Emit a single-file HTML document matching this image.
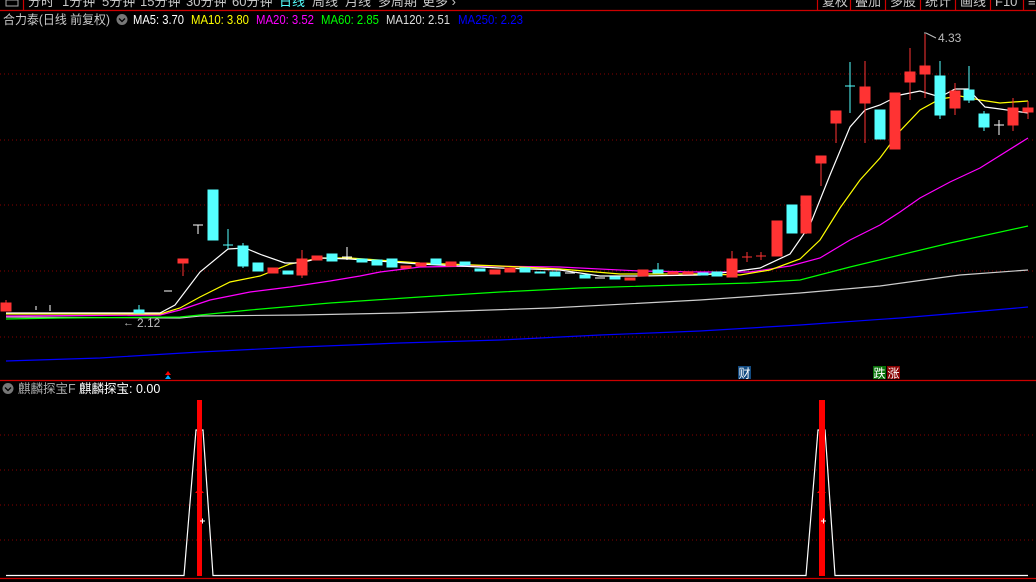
<!DOCTYPE html>
<html><head><meta charset="utf-8"><style>
html,body{margin:0;padding:0;background:#000;width:1036px;height:582px;overflow:hidden}
svg{display:block}
text{font-family:"Liberation Sans","Noto Sans CJK SC",sans-serif}
</style></head><body>
<svg width="1036" height="582" viewBox="0 0 1036 582" xmlns="http://www.w3.org/2000/svg">
<rect width="1036" height="582" fill="#000"/>
<!-- top menu -->
<g font-size="13" fill="#c8c8c8">
<text x="28" y="6">分时</text><text x="62" y="6">1分钟</text><text x="102" y="6">5分钟</text><text x="140" y="6">15分钟</text><text x="186" y="6">30分钟</text><text x="232" y="6">60分钟</text>
<text x="279" y="6" fill="#5ff">日线</text>
<text x="312" y="6">周线</text><text x="345" y="6">月线</text><text x="378" y="6">多周期</text><text x="422" y="6">更多 ›</text>
<text x="822" y="6">复权</text><text x="855" y="6">叠加</text><text x="890" y="6">多股</text><text x="925" y="6">统计</text><text x="960" y="6">画线</text><text x="995" y="6">F10</text><text x="1028" y="6">≡</text>
</g>
<rect x="6" y="0" width="12" height="6" fill="none" stroke="#aaa"/>
<g stroke="#c00" stroke-width="1.2">
<line x1="0" y1="10.5" x2="1036" y2="10.5"/><line x1="23.5" y1="0" x2="23.5" y2="10"/>
<line x1="817.5" y1="0" x2="817.5" y2="10"/><line x1="850.5" y1="0" x2="850.5" y2="10"/><line x1="885.5" y1="0" x2="885.5" y2="10"/><line x1="920.5" y1="0" x2="920.5" y2="10"/><line x1="955.5" y1="0" x2="955.5" y2="10"/><line x1="990.5" y1="0" x2="990.5" y2="10"/><line x1="1023.5" y1="0" x2="1023.5" y2="10"/>
<line x1="0" y1="380.5" x2="1036" y2="380.5"/><line x1="0" y1="578.5" x2="1036" y2="578.5"/>
</g>
<!-- legend -->
<g font-size="12.5">
<text x="3" y="24" fill="#c8c8c8" textLength="107" lengthAdjust="spacingAndGlyphs">合力泰(日线 前复权)</text>
<circle cx="122" cy="19.5" r="5.5" fill="#777"/><path d="M119 18.5l3 3 3-3" stroke="#000" fill="none" stroke-width="1.3"/>
<text x="133" y="24" fill="#fff" textLength="51" lengthAdjust="spacingAndGlyphs">MA5: 3.70</text>
<text x="191" y="24" fill="#ff0" textLength="58" lengthAdjust="spacingAndGlyphs">MA10: 3.80</text>
<text x="256" y="24" fill="#f0f" textLength="58" lengthAdjust="spacingAndGlyphs">MA20: 3.52</text>
<text x="321" y="24" fill="#0f0" textLength="58" lengthAdjust="spacingAndGlyphs">MA60: 2.85</text>
<text x="386" y="24" fill="#ddd" textLength="64" lengthAdjust="spacingAndGlyphs">MA120: 2.51</text>
<text x="458" y="24" fill="#00f" textLength="65" lengthAdjust="spacingAndGlyphs">MA250: 2.23</text>
</g>
<!-- grid -->
<g stroke="#800" stroke-dasharray="1,3">
<line x1="0" y1="74" x2="1036" y2="74"/><line x1="0" y1="140" x2="1036" y2="140"/><line x1="0" y1="205" x2="1036" y2="205"/><line x1="0" y1="271" x2="1036" y2="271"/><line x1="0" y1="337" x2="1036" y2="337"/>
<line x1="0" y1="435" x2="1036" y2="435"/><line x1="0" y1="470" x2="1036" y2="470"/><line x1="0" y1="505" x2="1036" y2="505"/><line x1="0" y1="540" x2="1036" y2="540"/>
</g>
<!-- MA lines -->
<g fill="none" stroke-width="1.2">
<polyline stroke="#00f" points="6,361 100,358 200,352 300,347 400,343 500,340 600,335 700,331 800,325 900,318 960,313 1028,307"/>
<polyline stroke="#ccc" points="6,317 180,318 200,316 300,315 400,313 550,308 700,300 800,293 880,286 960,275 1028,270"/>
<polyline stroke="#0f0" points="6,319 60,318 180,317 250,310 330,303 420,297 500,292 580,288 680,285 750,283 800,280 850,267 900,255 950,243 1028,226"/>
<polyline stroke="#f0f" points="6,316 160,315 180,310 210,300 250,292 290,287 330,281 360,276 380,272 420,267 480,266 560,267 640,271 700,272 750,272 790,266 820,258 850,240 880,225 900,212 920,198 950,182 980,168 1028,138"/>
<polyline stroke="#ff0" points="6,314 160,314 180,308 200,297 230,282 260,276 290,264 320,258 350,258 420,263 500,266 560,269 620,274 700,274 740,275 770,270 800,259 820,240 840,208 860,180 880,158 900,131 920,110 940,99 960,96 980,100 1000,103 1028,101"/>
<polyline stroke="#fff" points="6,313 160,313 175,305 200,272 228,249 245,248 262,255 285,263 300,263 320,258 350,259 420,264 500,268 560,270 600,276 640,276 700,275 730,272 760,268 790,254 810,225 830,175 850,127 865,110 880,105 900,95 920,91 940,97 955,89 968,89 985,107 1000,109 1028,113"/>
</g>
<!-- candles -->
<g stroke-width="1">
<g fill="#f33" stroke="#f33">
<rect x="1" y="303" width="10" height="8"/><line x1="6" y1="300" x2="6" y2="303"/>
<line x1="183" y1="259" x2="183" y2="276"/><rect x="178" y="259" width="10" height="4"/>
<rect x="268" y="268" width="10" height="5"/>
<line x1="302" y1="250" x2="302" y2="278"/><rect x="297" y="259" width="10" height="16"/>
<rect x="312" y="256" width="10" height="4"/>
<rect x="401" y="266" width="10" height="2"/><rect x="416" y="263" width="10" height="3"/><rect x="446" y="262" width="10" height="4"/>
<rect x="490" y="270" width="10" height="4"/><rect x="505" y="268" width="10" height="4"/><rect x="625" y="278" width="10" height="2"/><rect x="638" y="270" width="10" height="6"/><rect x="668" y="272" width="10" height="2"/><rect x="683" y="272" width="10" height="2"/>
<line x1="732" y1="251" x2="732" y2="277"/><rect x="727" y="259" width="10" height="18"/>
<line x1="742" y1="257" x2="752" y2="257"/><line x1="747" y1="252" x2="747" y2="262"/>
<line x1="756" y1="256" x2="766" y2="256"/><line x1="761" y1="252" x2="761" y2="260"/>
<rect x="772" y="221" width="10" height="35"/>
<line x1="806" y1="196" x2="806" y2="234"/><rect x="801" y="196" width="10" height="37"/>
<line x1="821" y1="156" x2="821" y2="186"/><rect x="816" y="156" width="10" height="7"/>
<line x1="836" y1="111" x2="836" y2="143"/><rect x="831" y="111" width="10" height="12"/>
<line x1="865" y1="61" x2="865" y2="143"/><rect x="860" y="87" width="10" height="16"/>
<rect x="890" y="93" width="10" height="56"/>
<line x1="910" y1="48" x2="910" y2="100"/><rect x="905" y="72" width="10" height="10"/>
<line x1="925" y1="32" x2="925" y2="98"/><rect x="920" y="66" width="10" height="8"/>
<line x1="955" y1="83" x2="955" y2="115"/><rect x="950" y="91" width="10" height="17"/>
<line x1="1013" y1="98" x2="1013" y2="131"/><rect x="1008" y="108" width="10" height="17"/>
<line x1="1028" y1="101" x2="1028" y2="119"/><rect x="1023" y="108" width="10" height="4"/>
</g>
<g fill="#5ff" stroke="#5ff">
<line x1="139" y1="305" x2="139" y2="313"/><rect x="134" y="310" width="10" height="3"/>
<rect x="208" y="190" width="10" height="50"/>
<line x1="228" y1="229" x2="228" y2="249"/><line x1="223" y1="245" x2="233" y2="245"/>
<line x1="243" y1="243" x2="243" y2="268"/><rect x="238" y="246" width="10" height="20"/>
<rect x="253" y="263" width="10" height="8"/><rect x="283" y="271" width="10" height="3"/>
<rect x="327" y="254" width="10" height="7"/>
<rect x="357" y="259" width="10" height="3"/><rect x="372" y="260" width="10" height="5"/><rect x="387" y="259" width="10" height="8"/><rect x="431" y="259" width="10" height="5"/><rect x="460" y="262" width="10" height="3"/><rect x="475" y="269" width="10" height="2"/><rect x="520" y="268" width="10" height="4"/><rect x="535" y="272" width="10" height="1"/><rect x="550" y="272" width="10" height="4"/><rect x="580" y="275" width="10" height="3"/><rect x="610" y="277" width="10" height="2"/>
<line x1="658" y1="263" x2="658" y2="273"/><rect x="653" y="270" width="10" height="3"/>
<rect x="698" y="273" width="10" height="2"/><rect x="712" y="272" width="10" height="4"/>
<rect x="787" y="205" width="10" height="28"/>
<line x1="850" y1="62" x2="850" y2="113"/><line x1="845" y1="86" x2="855" y2="86"/>
<rect x="875" y="110" width="10" height="29"/>
<line x1="940" y1="61" x2="940" y2="119"/><rect x="935" y="76" width="10" height="39"/>
<line x1="969" y1="66" x2="969" y2="103"/><rect x="964" y="90" width="10" height="10"/>
<line x1="984" y1="111" x2="984" y2="131"/><rect x="979" y="114" width="10" height="13"/>
</g>
<g stroke="#fff" fill="none">
<line x1="164" y1="291" x2="172" y2="291"/>
<line x1="193" y1="225" x2="203" y2="225"/><line x1="198" y1="225" x2="198" y2="234"/>
<line x1="342" y1="257" x2="352" y2="257"/><line x1="347" y1="247" x2="347" y2="260"/>
<line x1="565" y1="273" x2="575" y2="273"/><line x1="595" y1="278" x2="605" y2="278"/>
<line x1="994" y1="125" x2="1004" y2="125"/><line x1="999" y1="120" x2="999" y2="135"/>
<line x1="36" y1="310" x2="36" y2="306"/><line x1="50" y1="311" x2="50" y2="305"/>
</g>
</g>
<g font-size="12" fill="#bbb">
<text x="137" y="327">2.12</text><text x="123" y="326" font-size="11">←</text>
<text x="938" y="42">4.33</text>
</g>
<path d="M925 32 L925 34 M926 33 L936 38" stroke="#bbb" fill="none"/>
<!-- markers -->
<path d="M165 375 l3 -4 3 4z" fill="#f00"/><path d="M165 379 l3 -4 3 4z" fill="#0af"/>
<rect x="738" y="366" width="13" height="13" fill="#124a80"/><text x="738.5" y="377.5" font-size="12" fill="#fff">财</text>
<rect x="873" y="366" width="13" height="13" fill="#087008"/><text x="873.5" y="377.5" font-size="12" fill="#fff">跌</text>
<rect x="887" y="366" width="13" height="13" fill="#800"/><text x="887.5" y="377.5" font-size="12" fill="#fff">涨</text>
<!-- lower panel -->
<circle cx="8" cy="388.5" r="5.5" fill="#777"/><path d="M5 387.5l3 3 3-3" stroke="#000" fill="none" stroke-width="1.3"/>
<text x="18" y="393" font-size="12.5" fill="#aaa">麒麟探宝F</text>
<text x="79" y="393" font-size="12.5" fill="#fff">麒麟探宝: 0.00</text>
<polyline fill="none" stroke="#fff" stroke-width="1.2" points="6,575.5 184,575.5 196,430 203,430 213,575.5 806,575.5 818,430 825,430 835,575.5 1028,575.5"/>
<rect x="197" y="400" width="5" height="176" fill="#f00"/>
<rect x="819" y="400" width="6" height="176" fill="#f00"/>
<path d="M195 493 l4.5 -5 4.5 5z" fill="#f00"/><path d="M817 493 l4.5 -5 4.5 5z" fill="#f00"/>
<path d="M200 521h5M202.5 518.5v5M821 521h5M823.5 518.5v5" stroke="#fff"/>
</svg>
</body></html>
